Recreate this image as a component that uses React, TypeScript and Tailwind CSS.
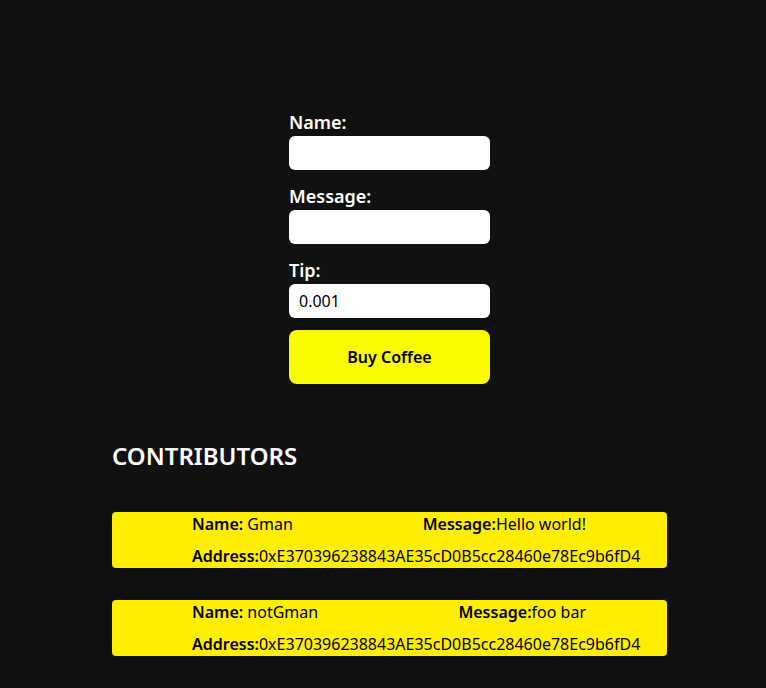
const contributors = [
  { name: "Gman", message: "Hello world!", address: "0xE370396238843AE35cD0B5cc28460e78Ec9b6fD4" },
  { name: "notGman", message: "foo bar", address: "0xE370396238843AE35cD0B5cc28460e78Ec9b6fD4" },
];

export default function App() {
  return (
    <div
      className="min-h-screen bg-[#111111] text-white"
      style={{ fontFamily: '"Noto Sans", sans-serif' }}
    >
      {/* Form */}
      <div className="flex justify-center pt-[112px] pl-[13px]">
        <form className="w-[201px] flex flex-col gap-4">
          <div className="flex flex-col">
            <label className="text-[18px] font-semibold leading-5 mb-1">Name:</label>
            <input className="h-[34px] rounded-md bg-white text-black px-[10px] text-[16px] outline-none" />
          </div>
          <div className="flex flex-col">
            <label className="text-[18px] font-semibold leading-5 mb-1">Message:</label>
            <input className="h-[34px] rounded-md bg-white text-black px-[10px] text-[16px] outline-none" />
          </div>
          <div className="flex flex-col">
            <label className="text-[18px] font-semibold leading-5 mb-1">Tip:</label>
            <input
              defaultValue="0.001"
              className="h-[34px] rounded-md bg-white text-black px-[10px] text-[16px] outline-none"
            />
            <button
              type="button"
              className="mt-3 h-[54px] rounded-lg bg-[#fafa00] text-black text-[16px] font-semibold"
            >
              Buy Coffee
            </button>
          </div>
        </form>
      </div>

      {/* Contributors */}
      <div className="px-[112px] pt-[56px] pb-8">
        <h2 className="text-[24px] font-semibold leading-8">CONTRIBUTORS</h2>
        <div className="mt-[40px] flex flex-col gap-8">
          {contributors.map((c, i) => (
            <div
              key={i}
              className="w-[555px] h-[56px] rounded bg-[#ffee00] text-black text-base pl-[80px] flex flex-col gap-2"
            >
              <div className="w-[394px] flex justify-between leading-6">
                <span>
                  <b className="font-semibold">Name:</b> {c.name}
                </span>
                <span>
                  <b className="font-semibold">Message:</b>
                  {c.message}
                </span>
              </div>
              <div className="leading-6">
                <b className="font-semibold">Address:</b>
                {c.address}
              </div>
            </div>
          ))}
        </div>
      </div>
    </div>
  );
}
